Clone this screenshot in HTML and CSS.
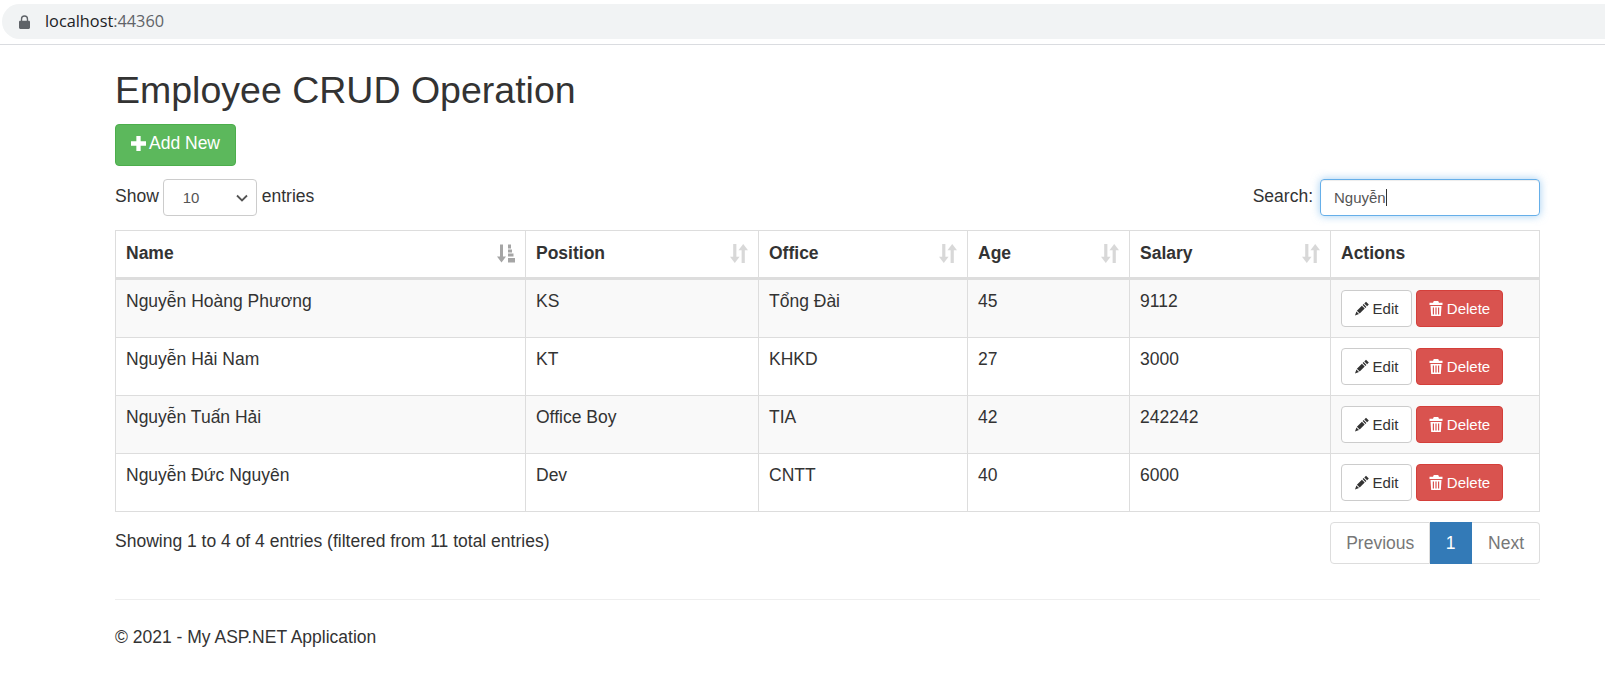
FILE: index.html
```html
<!DOCTYPE html>
<html lang="en">
<head>
    <meta charset="UTF-8">
    <title>Employee CRUD Operation</title>
    <link rel="stylesheet" href="styles.css">
</head>
<body>
<!--icon set, reused below-->
<svg class="icon-defs" width="0" height="0">
    <symbol id="i-sort" viewBox="0 0 17 18">
        <path d="M3 0h3v12h3l-4.500 6L0 12h3zM12.500 0L17 6h-3v12h-3V6H8z"/>
    </symbol>
    <symbol id="i-sort-attr" viewBox="0 0 18 18">
        <path d="M3 0h3v12h3l-4.500 6L0 12h3z"/>
        <path d="M11 0h3v4h-3zM11 5h4v3h-4zM11 9h5.500v3H11zM11 13.500h7V18h-7z"/>
    </symbol>
    <symbol id="i-pencil" viewBox="0 0 14 14">
        <path d="M11 0.200l2.800 2.800-1.700 1.700-2.800-2.800zM8.600 2.600l2.800 2.800-1 1-2.800-2.800zM6.900 4.300l2.800 2.800-5 5-2.800-2.800zM1.400 10l2.600 2.600L0 14z"/>
    </symbol>
    <symbol id="i-trash" viewBox="0 0 14 15">
        <path d="M4.800 0h4.400l.8 1.800h3.500v2.200H.5V1.800H4zM1.500 5h11l-.7 10H2.200zM3.800 6.500v7h1.200v-7zM6.400 6.500v7h1.200v-7zM9 6.500v7h1.200v-7z" fill-rule="evenodd"/>
    </symbol>
</svg>

<header class="browser-bar">
    <div class="address">
        <svg class="lock" viewBox="0 0 12 15" width="11" height="14"><path d="M2 6V4.200a4 4 0 0 1 8 0V6h.6c.8 0 1.400.6 1.400 1.400v6.200c0 .8-.6 1.400-1.400 1.400H1.400C.6 15 0 14.400 0 13.600V7.400C0 6.600.6 6 1.400 6zm1.500 0h5V4.200a2.500 2.500 0 0 0-5 0z"/></svg>
        <span class="host">localhost<span class="port">:44360</span></span>
    </div>
</header>

<main class="container">
    <h1>Employee CRUD Operation</h1>
    <a class="btn btn-success btn-add"><svg class="ico-plus" viewBox="0 0 14 14" width="15" height="15"><path d="M5 0h4v5h5v4H9v5H5V9H0V5h5z"/></svg> Add New</a>

    <div class="table-tools">
        <label class="length"><span class="lift">Show</span>
            <select class="form-control select-length"><option>10</option><option>25</option></select>
            <span class="lift">entries</span></label>
        <label class="search"><span class="lift">Search:</span>
            <span class="search-box">Nguyễn<i class="caret"></i></span>
        </label>
    </div>

    <table class="data-table">
        <colgroup>
            <col class="c-name"><col class="c-pos"><col class="c-office"><col class="c-age"><col class="c-salary"><col class="c-actions">
        </colgroup>
        <thead>
        <tr>
            <th><div class="th-in">Name <svg class="sort active"><use href="#i-sort-attr"/></svg></div></th>
            <th><div class="th-in">Position <svg class="sort"><use href="#i-sort"/></svg></div></th>
            <th><div class="th-in">Office <svg class="sort"><use href="#i-sort"/></svg></div></th>
            <th><div class="th-in">Age <svg class="sort"><use href="#i-sort"/></svg></div></th>
            <th><div class="th-in">Salary <svg class="sort"><use href="#i-sort"/></svg></div></th>
            <th><div class="th-in">Actions</div></th>
        </tr>
        </thead>
        <tbody>
        <tr>
            <td>Nguyễn Hoàng Phương</td><td>KS</td><td>Tổng Đài</td><td>45</td><td>9112</td>
            <td class="actions"><a class="btn btn-sm btn-default"><svg class="ico"><use href="#i-pencil"/></svg> Edit</a><a class="btn btn-sm btn-danger"><svg class="ico"><use href="#i-trash"/></svg> Delete</a></td>
        </tr>
        <tr>
            <td>Nguyễn Hải Nam</td><td>KT</td><td>KHKD</td><td>27</td><td>3000</td>
            <td class="actions"><a class="btn btn-sm btn-default"><svg class="ico"><use href="#i-pencil"/></svg> Edit</a><a class="btn btn-sm btn-danger"><svg class="ico"><use href="#i-trash"/></svg> Delete</a></td>
        </tr>
        <tr>
            <td>Nguyễn Tuấn Hải</td><td>Office Boy</td><td>TIA</td><td>42</td><td>242242</td>
            <td class="actions"><a class="btn btn-sm btn-default"><svg class="ico"><use href="#i-pencil"/></svg> Edit</a><a class="btn btn-sm btn-danger"><svg class="ico"><use href="#i-trash"/></svg> Delete</a></td>
        </tr>
        <tr>
            <td>Nguyễn Đức Nguyên</td><td>Dev</td><td>CNTT</td><td>40</td><td>6000</td>
            <td class="actions"><a class="btn btn-sm btn-default"><svg class="ico"><use href="#i-pencil"/></svg> Edit</a><a class="btn btn-sm btn-danger"><svg class="ico"><use href="#i-trash"/></svg> Delete</a></td>
        </tr>
        </tbody>
    </table>

    <div class="table-foot">
        <div class="info">Showing 1 to 4 of 4 entries (filtered from 11 total entries)</div>
        <ul class="pagination">
            <li>Previous</li>
            <li class="active">1</li>
            <li>Next</li>
        </ul>
    </div>

    <hr>
    <footer class="site-foot">© 2021 - My ASP.NET Application</footer>
</main>
</body>
</html>
```

FILE: styles.css
```css
* {
    box-sizing: border-box;
}

html, body {
    margin: 0;
    padding: 0;
    background: #fff;
}

body {
    font-family: "Liberation Sans", Arial, sans-serif;
    font-size: 17.5px;
    line-height: 25px;
    color: #333;
    overflow: hidden;
}

.icon-defs {
    position: absolute;
}

/*browser address bar*/
.browser-bar {
    height: 45px;
    padding: 4px 0 5px 2px;
    border-bottom: 1px solid #dadce0;
}

.address {
    display: flex;
    align-items: center;
    height: 35px;
    padding-left: 17px;
    background: #f1f3f4;
    border-radius: 18px 0 0 18px;
}

.lock {
    fill: #5f6368;
    margin-right: 15px;
}

.host {
    font-family: "Open Sans", sans-serif;
    font-size: 16.300px;
    color: #202124;
}

.port {
    color: #5f6368;
}

/*page body*/
.container {
    margin: 0 65px 0 115px;
}

h1 {
    margin: 26px 0 15px;
    font-size: 37.500px;
    font-weight: 400;
    line-height: 38px;
}

.btn {
    display: inline-flex;
    align-items: center;
    justify-content: center;
    vertical-align: top;
    border: 1px solid transparent;
    border-radius: 4px;
}

.btn-add {
    height: 42px;
    padding: 0 15px 3px;
    gap: 3px;
}

.btn-success {
    background: #5cb85c;
    border-color: #4cae4c;
    color: #fff;
}

.ico-plus {
    fill: #fff;
}

.btn-sm {
    height: 37px;
    padding: 0;
    font-size: 15px;
    gap: 4px;
}

.btn-default {
    background: #fff;
    border-color: #ccc;
    color: #333;
    width: 71px;
}

.btn-danger {
    background: #d9534f;
    border-color: #d43f3a;
    color: #fff;
    width: 87px;
    margin-left: 4px;
}

.ico {
    width: 14px;
    height: 15px;
    fill: currentColor;
}

/*show / search row*/
.table-tools {
    display: flex;
    justify-content: space-between;
    align-items: center;
    margin: 13px 0 14px;
    height: 37px;
}

.length, .search {
    display: flex;
    align-items: center;
    gap: 4px;
}

.lift {
    margin-top: -3px;
}

.form-control {
    height: 37px;
    font-family: "Liberation Sans", Arial, sans-serif;
    font-size: 15px;
    color: #555;
    background: #fff;
    border: 1px solid #ccc;
    border-radius: 4px;
}

.select-length {
    appearance: none;
    width: 94px;
    margin-right: 1px;
    padding: 0 0 0 19px;
    background: #fff url("data:image/svg+xml,%3Csvg xmlns='http://www.w3.org/2000/svg' width='12' height='8'%3E%3Cpath d='M1 1.500l5 5 5-5' fill='none' stroke='%23555' stroke-width='1.800'/%3E%3C/svg%3E") no-repeat right 8px center;
}

.search {
    gap: 7px;
}

.search-box {
    display: flex;
    align-items: center;
    width: 220px;
    height: 37px;
    padding: 0 13px;
    font-size: 15px;
    color: #555;
    border: 1px solid #66afe9;
    border-radius: 4px;
    box-shadow: inset 0 1px 1px rgba(0, 0, 0, .075), 0 0 8px rgba(102, 175, 233, .6);
}

.caret {
    width: 1px;
    height: 17px;
    background: #333;
}

/*table*/
.data-table {
    width: calc(100% - 1px);
    table-layout: fixed;
    border-collapse: collapse;
}

.c-name { width: 410px; }
.c-pos { width: 233px; }
.c-office { width: 209px; }
.c-age { width: 162px; }
.c-salary { width: 201px; }
.c-actions { width: 209px; }

.data-table th, .data-table td {
    border: 1px solid #ddd;
    padding: 9px 10px;
    text-align: left;
    vertical-align: top;
}

.data-table th {
    height: 48px;
    padding-top: 7px;
    padding-bottom: 8px;
    border-bottom: 3px solid #ddd;
    vertical-align: middle;
}

.th-in {
    display: flex;
    justify-content: space-between;
    align-items: center;
}

.sort {
    width: 18px;
    height: 19px;
    fill: #000;
    opacity: .15;
}

.sort.active {
    opacity: .35;
}

.data-table tbody tr:nth-child(odd) td {
    background: #f9f9f9;
}

.data-table td.actions {
    white-space: nowrap;
    padding-top: 10px;
    padding-bottom: 10px;
    font-size: 0;
}

/*info and pager*/
.table-foot {
    display: flex;
    justify-content: space-between;
    align-items: flex-start;
    margin-top: 10px;
}

.info {
    padding-top: 7px;
}

.pagination {
    display: flex;
    height: 42px;
    margin: 0;
    padding: 0;
    list-style: none;
    color: #777;
}

.pagination li {
    display: flex;
    align-items: center;
    padding: 0 15px;
    border: 1px solid #ddd;
    border-left-width: 0;
}

.pagination li:first-child {
    border-left-width: 1px;
    border-radius: 4px 0 0 4px;
}

.pagination li:last-child {
    padding-left: 16px;
    border-radius: 0 4px 4px 0;
}

.pagination li.active {
    padding: 0 15.500px;
    background: #337ab7;
    border-color: #337ab7;
    color: #fff;
}

hr {
    margin: 35px 0 0;
    border: 0;
    border-top: 1px solid #eee;
}

.site-foot {
    margin-top: 25px;
}
```
